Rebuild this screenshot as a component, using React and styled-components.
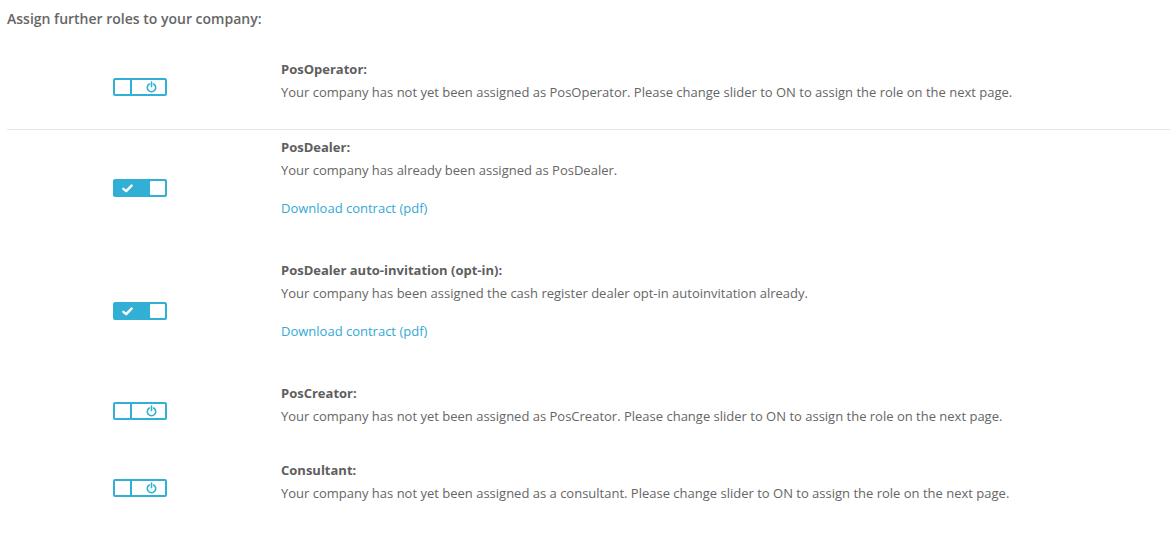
import React from 'react'
import styled, { createGlobalStyle } from 'styled-components'

const GlobalStyle = createGlobalStyle`
  body {
    margin: 0;
    background: #fff;
    font-family: 'Open Sans', 'Liberation Sans', sans-serif;
    color: #666;
  }
`

const roles = [
  {
    name: 'PosOperator',
    active: false,
    text: 'Your company has not yet been assigned as PosOperator. Please change slider to ON to assign the role on the next page.',
    divider: true,
  },
  {
    name: 'PosDealer',
    active: true,
    text: 'Your company has already been assigned as PosDealer.',
    link: 'Download contract (pdf)',
  },
  {
    name: 'PosDealer auto-invitation (opt-in)',
    active: true,
    text: 'Your company has been assigned the cash register dealer opt-in autoinvitation already.',
    link: 'Download contract (pdf)',
  },
  {
    name: 'PosCreator',
    active: false,
    text: 'Your company has not yet been assigned as PosCreator. Please change slider to ON to assign the role on the next page.',
  },
  {
    name: 'Consultant',
    active: false,
    text: 'Your company has not yet been assigned as a consultant. Please change slider to ON to assign the role on the next page.',
  },
]

function PowerIcon() {
  return (
    <svg width="11" height="12" viewBox="0 0 11 12" fill="none">
      <path d="M3.3 3 A4.2 4.2 0 1 0 7.7 3" stroke="#31afd4" strokeWidth="1.6" strokeLinecap="round" />
      <line x1="5.5" y1="1" x2="5.5" y2="5.6" stroke="#31afd4" strokeWidth="1.6" strokeLinecap="round" />
    </svg>
  )
}

function CheckIcon() {
  return (
    <svg width="11" height="9" viewBox="0 0 11 9" fill="none">
      <path d="M1.4 4.8 L4.2 7.2 L9.6 1.6" stroke="#fff" strokeWidth="2.4" strokeLinecap="round" strokeLinejoin="round" />
    </svg>
  )
}

function Toggle({ on }) {
  return (
    <Switch $on={on}>
      {on ? (
        <>
          <Side $on><CheckIcon /></Side>
          <Knob $on />
        </>
      ) : (
        <>
          <Knob />
          <Side><PowerIcon /></Side>
        </>
      )}
    </Switch>
  )
}

export default function App() {
  return (
    <Page>
      <GlobalStyle />
      <Heading>Assign further roles to your company:</Heading>
      {roles.map((r) => (
        <React.Fragment key={r.name}>
          <Row>
            <ToggleCell>
              <Toggle on={r.active} />
            </ToggleCell>
            <Info>
              <Title>{r.name}:</Title>
              <Text>{r.text}</Text>
              {r.link && <Link href="#">{r.link}</Link>}
            </Info>
          </Row>
          {r.divider && <Divider />}
        </React.Fragment>
      ))}
    </Page>
  )
}

const Page = styled.div`
  padding: 8px 0 20px 7px;
`

const Heading = styled.div`
  font-size: 14px;
  font-weight: 600;
  line-height: 22px;
  color: #666;
  margin-bottom: 28px;
`

const Row = styled.div`
  display: flex;
  align-items: center;
  margin-bottom: 16px;
`

const ToggleCell = styled.div`
  width: 274px;
  flex: none;
  display: flex;
  padding-left: 106px;
  margin-bottom: 3px;
  box-sizing: border-box;
`

const Info = styled.div`
  display: flex;
  flex-direction: column;
  font-size: 13px;
  line-height: 22px;
`

const Title = styled.div`
  font-weight: 700;
  color: #5e5e5e;
  margin-bottom: 1px;
`

const Text = styled.div`
  color: #666;
  margin-bottom: 16px;
`

const Link = styled.a`
  color: #31a9d6;
  text-decoration: none;
  margin-bottom: 24px;
`

const Divider = styled.hr`
  border: none;
  border-top: 1px solid #e6e6e6;
  margin: -6px 0 6px 0;
`

const Switch = styled.div`
  width: 54px;
  height: 18px;
  box-sizing: border-box;
  border: 2px solid #31afd4;
  border-radius: 2px;
  display: flex;
  background: ${(p) => (p.$on ? '#31afd4' : '#fff')};
  overflow: hidden;
`

const Knob = styled.div`
  width: ${(p) => (p.$on ? '15px' : '17px')};
  flex: none;
  background: #fff;
  border-right: ${(p) => (p.$on ? 'none' : '2px solid #31afd4')};
  box-sizing: border-box;
  border-radius: ${(p) => (p.$on ? '1px' : '0')};
`

const Side = styled.div`
  flex: 1;
  display: flex;
  align-items: center;
  justify-content: center;
  padding: ${(p) => (p.$on ? '0 10px 0 0' : '0 0 0 6px')};
`
